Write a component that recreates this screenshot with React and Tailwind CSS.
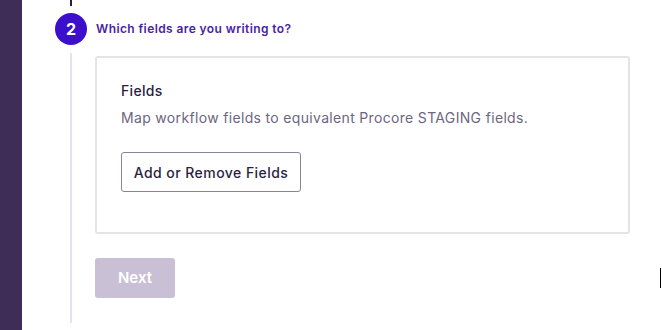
import React from "react";

const StepTwo = () => {
  return (
    <div className="flex-1 pl-[33px]">
      {/* connector from previous step */}
      <div className="w-[32px] flex justify-center">
        <div className="w-[2px] h-[6px] bg-[#2a1f3d]" />
      </div>

      {/* Step header */}
      <div className="flex items-center gap-[9px] mt-[7px]">
        <div className="w-[32px] h-[32px] rounded-full bg-[#3c0fcd] text-white flex items-center justify-center text-[16px] font-bold">
          2
        </div>
        <h2 className="text-[12px] font-semibold text-[#4a1e9e] leading-none tracking-[0.4px]">
          Which fields are you writing to?
        </h2>
      </div>

      {/* Step body */}
      <div className="flex mt-[8px]">
        <div className="w-[32px] flex justify-center">
          <div className="w-[2px] h-[270px] bg-[#e4e3ea]" />
        </div>
        <div className="ml-[8px] w-[535px] mt-[3px]">
          <div className="border-2 border-[#e4e3e8] rounded-[3px] pl-[24px] pt-[23px] pb-[40px]">
            <div className="text-[14px] leading-[20px] text-[#2b1f3f] font-medium tracking-[0.3px]">Fields</div>
            <p className="mt-[7px] text-[14px] leading-[20px] text-[#6c6680] tracking-[0.33px]">
              Map workflow fields to equivalent Procore STAGING fields.
            </p>
            <button className="mt-[24px] h-[40px] w-[180px] border border-[#8a829a] rounded-[3px] text-[14px] text-[#2b1f3f] font-medium tracking-[0.45px]">
              Add or Remove Fields
            </button>
          </div>
          <button
            disabled
            className="mt-[24px] w-[80px] h-[40px] rounded-[3px] bg-[#c9c0d6] text-white text-[15px] font-semibold"
          >
            Next
          </button>
        </div>
      </div>
    </div>
  );
};

export default function App() {
  return (
    <div
      className="relative flex w-[662px] h-[330px] bg-white overflow-hidden"
      style={{ fontFamily: "Inter, 'Noto Sans', sans-serif" }}
    >
      <div className="w-[22px] h-full bg-[#3e2d56]" />
      <StepTwo />
      {/* text cursor */}
      <div className="absolute left-[660px] top-[268px] w-[1px] h-[20px] bg-black" />
    </div>
  );
}
